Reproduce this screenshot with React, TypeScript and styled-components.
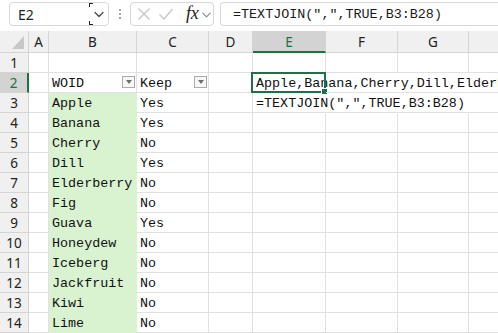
import * as React from 'react';
import styled, { createGlobalStyle } from 'styled-components';

const GlobalStyle = createGlobalStyle`
  html, body { margin: 0; padding: 0; background: #fff; }
  body { width: 498px; height: 333px; overflow: hidden; }
`;

const UI_FONT = `"Noto Sans", "Open Sans", "Liberation Sans", sans-serif`;
const CELL_FONT = `"Liberation Mono", "DejaVu Sans Mono", monospace`;
const GREEN = '#1e7145';
const GRID = '#e1e1e1';
const HEAD_LINE = '#d4d4d4';

const Page = styled.div`
  width: 498px;
  height: 333px;
  overflow: hidden;
  background: #fff;
  display: flex;
  flex-direction: column;
`;

/* ---------- formula bar ---------- */

const TopBar = styled.div`
  height: 31px;
  flex: none;
  display: flex;
  align-items: flex-start;
  padding: 2px 0 0 9px;
  box-sizing: border-box;
`;

const Box = styled.div<{ $w?: number; $grow?: boolean }>`
  height: 24px;
  box-sizing: border-box;
  border: 1px solid #d8d8d8;
  border-radius: 4px;
  background: #fff;
  display: flex;
  align-items: center;
  ${p => (p.$w ? `width: ${p.$w}px; flex: none;` : '')}
  ${p => (p.$grow ? 'flex: 1; border-right: none; border-radius: 4px 0 0 4px;' : '')}
`;

const NameText = styled.span`
  font-family: ${UI_FONT};
  font-size: 14px;
  color: #1f1f1f;
  padding-left: 8px;
  flex: 1;
`;

const DropZone = styled.div`
  width: 19px;
  height: 22px;
  position: relative;
  display: flex;
  align-items: center;
  justify-content: center;
  &::before, &::after {
    content: '';
    position: absolute;
    left: 0;
    width: 3px;
    height: 3px;
    border-left: 1px solid #222;
  }
  &::before { top: 0; border-top: 1px solid #222; }
  &::after { bottom: 0; border-bottom: 1px solid #222; }
`;

const Dots = styled.div`
  width: 21px;
  height: 24px;
  flex: none;
  display: flex;
  flex-direction: column;
  align-items: center;
  justify-content: center;
  gap: 2px;
  & > i { width: 2px; height: 2px; background: #8a8a8a; border-radius: 1px; }
`;

const FxInner = styled.div`
  display: flex;
  align-items: center;
  padding-left: 6px;
`;

const Gap = styled.span<{ $w: number }>`
  width: ${p => p.$w}px;
  flex: none;
`;

const Fx = styled.span`
  font-family: "Liberation Serif", "DejaVu Serif", serif;
  font-style: italic;
  font-size: 18px;
  color: #222;
  margin: -2px 3px 0 12px;
  letter-spacing: -0.3px;
`;

const Spacer = styled.div`
  width: 6px;
  flex: none;
`;

const FormulaText = styled.span`
  font-family: ${CELL_FONT};
  font-size: 13.4px;
  color: #1a1a1a;
  padding-left: 12px;
  white-space: nowrap;
`;

/* ---------- sheet ---------- */

const Sheet = styled.div`
  flex: 1;
  display: grid;
  grid-template-columns: 29px 20px 88px 72px 44px 73px 72px 71px 72px;
  grid-template-rows: 22px repeat(14, 20px);
  overflow: hidden;
`;

const Corner = styled.div`
  background: #f0f0f0;
  border-right: 1px solid ${HEAD_LINE};
  border-bottom: 1px solid ${HEAD_LINE};
  box-sizing: border-box;
  display: flex;
  align-items: flex-end;
  justify-content: flex-end;
  padding: 0 4px 3px 0;
  &::after {
    content: '';
    width: 0;
    height: 0;
    border-left: 12px solid transparent;
    border-bottom: 13px solid #c8c8c8;
  }
`;

const ColHead = styled.div<{ $sel?: boolean }>`
  box-sizing: border-box;
  background: ${p => (p.$sel ? '#d3d3d3' : '#f0f0f0')};
  border-right: 1px solid ${HEAD_LINE};
  border-bottom: ${p => (p.$sel ? `2px solid ${GREEN}` : `1px solid ${HEAD_LINE}`)};
  display: flex;
  align-items: center;
  justify-content: center;
  font-family: ${UI_FONT};
  font-size: 13.5px;
  color: ${p => (p.$sel ? GREEN : '#222')};
  padding-top: ${p => (p.$sel ? '2px' : '1px')};
`;

const RowHead = styled.div<{ $sel?: boolean }>`
  box-sizing: border-box;
  background: ${p => (p.$sel ? '#d3d3d3' : '#f0f0f0')};
  border-right: ${p => (p.$sel ? `2px solid ${GREEN}` : `1px solid ${HEAD_LINE}`)};
  border-bottom: 1px solid ${HEAD_LINE};
  display: flex;
  align-items: center;
  justify-content: center;
  padding-top: 1px;
  font-family: ${UI_FONT};
  font-size: 13.5px;
  color: ${p => (p.$sel ? GREEN : '#222')};
`;

const Cell = styled.div<{ $fill?: string; $noRight?: boolean }>`
  box-sizing: border-box;
  position: relative;
  background: ${p => p.$fill ?? 'transparent'};
  border-right: 1px solid ${p => (p.$noRight ? 'transparent' : p.$fill ?? GRID)};
  border-bottom: 1px solid ${p => p.$fill ?? GRID};
  display: flex;
  align-items: flex-end;
  justify-content: space-between;
  padding: 0 0 0 3px;
  line-height: 16px;
  font-family: ${CELL_FONT};
  font-size: 13.4px;
  color: #111;
  white-space: nowrap;
  overflow: visible;
  z-index: 1;
`;

const Spill = styled.span`
  position: relative;
  z-index: 2;
`;

const FilterBtn = styled.div`
  width: 13px;
  height: 12px;
  box-sizing: border-box;
  flex: none;
  align-self: center;
  margin-right: 1px;
  margin-top: -1px;
  border: 1px solid #ababab;
  background: #f7f7f7;
  display: flex;
  align-items: center;
  justify-content: center;
  &::after {
    content: '';
    width: 0;
    height: 0;
    border-left: 3.5px solid transparent;
    border-right: 3.5px solid transparent;
    border-top: 4px solid #6d6d6d;
  }
`;

const Selection = styled.div`
  position: absolute;
  left: -2px;
  top: -1px;
  right: -1px;
  bottom: -1px;
  border: 2px solid ${GREEN};
  pointer-events: none;
  z-index: 3;
  &::after {
    content: '';
    position: absolute;
    right: -4px;
    bottom: -4px;
    width: 5px;
    height: 5px;
    background: ${GREEN};
    border: 1px solid #fff;
  }
`;

const FILL = '#d9f2d0';
const COLS = ['A', 'B', 'C', 'D', 'E', 'F', 'G', 'H'];
const FORMULA = '=TEXTJOIN(",",TRUE,B3:B28)';

const data: [string, string][] = [
  ['Apple', 'Yes'],
  ['Banana', 'Yes'],
  ['Cherry', 'No'],
  ['Dill', 'Yes'],
  ['Elderberry', 'No'],
  ['Fig', 'No'],
  ['Guava', 'Yes'],
  ['Honeydew', 'No'],
  ['Iceberg', 'No'],
  ['Jackfruit', 'No'],
  ['Kiwi', 'No'],
  ['Lime', 'No'],
];

const Chevron = ({ color = '#444', size = 12 }: { color?: string; size?: number }) => (
  <svg width={size} height={size} viewBox="0 0 12 12" fill="none">
    <path d="M2 4.5 L6 8.5 L10 4.5" stroke={color} strokeWidth="1.2" strokeLinecap="round" strokeLinejoin="round" />
  </svg>
);

const Cross = () => (
  <svg width="14" height="14" viewBox="0 0 14 14" fill="none">
    <path d="M1.5 1.5 L12.5 12.5 M12.5 1.5 L1.5 12.5" stroke="#c4c4c4" strokeWidth="1.2" />
  </svg>
);

const Check = () => (
  <svg width="16" height="14" viewBox="0 0 16 14" fill="none">
    <path d="M1.5 7.5 L6 12 L14.5 2" stroke="#c4c4c4" strokeWidth="1.2" />
  </svg>
);

const FormulaBar = () => (
  <TopBar>
    <Box $w={100}>
      <NameText>E2</NameText>
      <DropZone>
        <Chevron />
      </DropZone>
    </Box>
    <Dots>
      <i />
      <i />
      <i />
    </Dots>
    <Box $w={84}>
      <FxInner>
        <Cross />
        <Gap $w={7} />
        <Check />
        <Fx>fx</Fx>
        <Chevron color="#8a8a8a" size={11} />
      </FxInner>
    </Box>
    <Spacer />
    <Box $grow>
      <FormulaText>{FORMULA}</FormulaText>
    </Box>
  </TopBar>
);

const renderRow = (r: number) => {
  const cells: React.ReactNode[] = [];
  const spillRow = r === 2 || r === 3;
  COLS.forEach(c => {
    const key = `${c}${r}`;
    const noRight = spillRow && ['E', 'F', 'G'].includes(c);
    if (r === 2 && c === 'B') {
      cells.push(
        <Cell key={key}>
          WOID
          <FilterBtn />
        </Cell>
      );
    } else if (r === 2 && c === 'C') {
      cells.push(
        <Cell key={key}>
          Keep
          <FilterBtn />
        </Cell>
      );
    } else if (r === 2 && c === 'E') {
      cells.push(
        <Cell key={key} $noRight={noRight}>
          <Spill>Apple,Banana,Cherry,Dill,Elderberry,Fig</Spill>
          <Selection />
        </Cell>
      );
    } else if (r === 3 && c === 'E') {
      cells.push(
        <Cell key={key} $noRight={noRight}>
          <Spill>{FORMULA}</Spill>
        </Cell>
      );
    } else if (r >= 3 && c === 'B') {
      cells.push(
        <Cell key={key} $fill={FILL}>
          {data[r - 3][0]}
        </Cell>
      );
    } else if (r >= 3 && c === 'C') {
      cells.push(<Cell key={key}>{data[r - 3][1]}</Cell>);
    } else {
      cells.push(<Cell key={key} $noRight={noRight} />);
    }
  });
  return cells;
};

export default function App() {
  const rows = Array.from({ length: 14 }, (_, i) => i + 1);
  return (
    <Page>
      <GlobalStyle />
      <FormulaBar />
      <Sheet>
        <Corner />
        {COLS.map(c => (
          <ColHead key={c} $sel={c === 'E'}>
            {c}
          </ColHead>
        ))}
        {rows.map(r => (
          <React.Fragment key={r}>
            <RowHead $sel={r === 2}>{r}</RowHead>
            {renderRow(r)}
          </React.Fragment>
        ))}
      </Sheet>
    </Page>
  );
}
